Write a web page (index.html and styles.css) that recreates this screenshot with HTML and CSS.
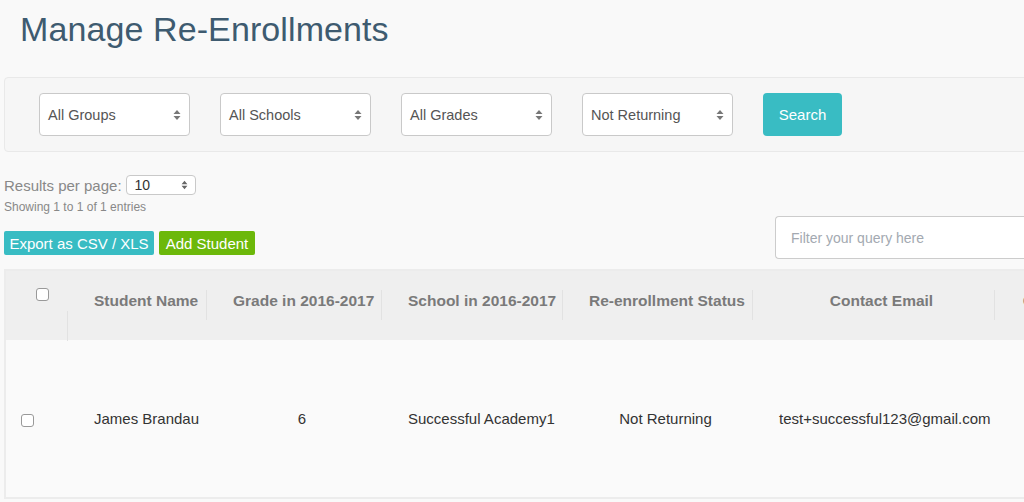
FILE: index.html
```html
<!DOCTYPE html>
<html>
<head>
<meta charset="utf-8">
<link rel="stylesheet" href="styles.css">
</head>
<body>
<div class="page">
  <h1 class="title">Manage Re-Enrollments</h1>

  <div class="filters">
    <div class="select big"><span>All Groups</span><svg class="arr" width="8" height="12" viewBox="0 0 8 12"><path d="M4 1 L7.5 5 H0.5 Z M4 11 L0.5 7 H7.5 Z" fill="#777"/></svg></div>
    <div class="select big"><span>All Schools</span><svg class="arr" width="8" height="12" viewBox="0 0 8 12"><path d="M4 1 L7.5 5 H0.5 Z M4 11 L0.5 7 H7.5 Z" fill="#777"/></svg></div>
    <div class="select big"><span>All Grades</span><svg class="arr" width="8" height="12" viewBox="0 0 8 12"><path d="M4 1 L7.5 5 H0.5 Z M4 11 L0.5 7 H7.5 Z" fill="#777"/></svg></div>
    <div class="select big"><span>Not Returning</span><svg class="arr" width="8" height="12" viewBox="0 0 8 12"><path d="M4 1 L7.5 5 H0.5 Z M4 11 L0.5 7 H7.5 Z" fill="#777"/></svg></div>
    <button class="search">Search</button>
  </div>

  <div class="tools">
    <div class="left">
      <div class="perpage">
        <span class="lbl">Results per page:</span>
        <div class="select small"><span>10</span><svg class="arr" width="7" height="10" viewBox="0 0 8 12"><path d="M4 1 L7.5 5 H0.5 Z M4 11 L0.5 7 H7.5 Z" fill="#666"/></svg></div>
      </div>
      <div class="showing">Showing 1 to 1 of 1 entries</div>
      <div class="btns">
        <button class="btn teal">Export as CSV / XLS</button>
        <button class="btn green">Add Student</button>
      </div>
    </div>
    <div class="query">Filter your query here</div>
  </div>

  <div class="tablewrap">
    <table class="grid">
      <colgroup>
        <col style="width:62px">
        <col style="width:139px">
        <col style="width:175px">
        <col style="width:181px">
        <col style="width:190px">
        <col style="width:242px">
        <col style="width:150px">
      </colgroup>
      <thead>
        <tr>
          <th class="chk"><span class="box"></span></th>
          <th class="first">Student Name</th>
          <th>Grade in 2016-2017</th>
          <th>School in 2016-2017</th>
          <th>Re-enrollment Status</th>
          <th>Contact Email</th>
          <th>Contact Phone</th>
        </tr>
      </thead>
      <tbody>
        <tr>
          <td class="chk"><span class="box"></span></td>
          <td>James Brandau</td>
          <td>6</td>
          <td>Successful Academy1</td>
          <td>Not Returning</td>
          <td>test+successful123@gmail.com</td>
          <td></td>
        </tr>
      </tbody>
    </table>
  </div>
</div>
</body>
</html>
```

FILE: styles.css
```css
html, body {
  margin: 0;
  padding: 0;
  overflow: hidden;
  background: #f9f9f9;
  font-family: "Liberation Sans", Arial, sans-serif;
}
.page {
  width: 1200px;
  padding: 0 0 0 4px;
}
.title {
  margin: 0;
  padding: 10px 0 0 16px;
  height: 69px;
  box-sizing: border-box;
  font-size: 34px;
  font-weight: normal;
  color: #3e5b70;
  letter-spacing: 0.1px;
}
.filters {
  box-sizing: border-box;
  height: 75px;
  margin-top: 8px;
  border: 1px solid #e9e9e9;
  border-radius: 4px;
  background: #f6f6f6;
  display: flex;
  align-items: center;
  gap: 30px;
  padding: 0 0 0 34px;
}
.select {
  box-sizing: border-box;
  display: flex;
  align-items: center;
  justify-content: space-between;
  background: #fff;
  border: 1px solid #c9c9c9;
  border-radius: 4px;
}
.select.big {
  width: 151px;
  height: 43px;
  padding: 0 8px 0 8px;
  font-size: 14.5px;
  color: #555;
}
.select.small {
  width: 70px;
  height: 20px;
  padding: 0 7px 0 8px;
  font-size: 14px;
  color: #333;
  border-radius: 4px;
}
.search {
  width: 79px;
  height: 43px;
  border: none;
  border-radius: 4px;
  background: #39bcc3;
  color: #fff;
  font-family: inherit;
  font-size: 15px;
  padding: 0;
}
.tools {
  display: flex;
  justify-content: space-between;
  align-items: flex-start;
  width: 1020px;
}
.left {
  display: flex;
  flex-direction: column;
}
.perpage {
  display: flex;
  align-items: center;
  gap: 4px;
  margin-top: 22px;
  height: 22px;
}
.lbl {
  font-size: 15px;
  color: #888;
}
.showing {
  font-size: 12px;
  color: #888;
  margin-top: 4px;
  line-height: 15px;
}
.btns {
  display: flex;
  gap: 5px;
  margin-top: 16px;
}
.btn {
  height: 24px;
  border: none;
  border-radius: 2px;
  color: #fff;
  font-family: inherit;
  font-size: 15px;
  padding: 0;
  white-space: nowrap;
}
.btn.teal { background: #38bcc3; width: 150px; }
.btn.green { background: #6cb80a; width: 96px; }
.query {
  box-sizing: border-box;
  margin-top: 64px;
  width: 249px;
  height: 43px;
  border: 1px solid #cccccc;
  border-right: none;
  border-radius: 4px 0 0 4px;
  background: #fff;
  padding: 0 0 0 15px;
  display: flex;
  align-items: center;
  font-size: 14px;
  color: #a3a9b1;
}
.tablewrap {
  margin-top: 10px;
}
.grid {
  border-collapse: collapse;
  table-layout: fixed;
  width: 1139px;
  border: 2px solid #ececec;
  border-right: none;
}
.grid th {
  position: relative;
  background: #efefef;
  height: 70px;
  box-sizing: border-box;
  vertical-align: top;
  padding: 21px 10px 0 27px;
  font-size: 15.5px;
  font-weight: bold;
  color: #7a7a7a;
  text-align: center;
  white-space: nowrap;
}
.grid th::before {
  content: "";
  position: absolute;
  left: 0;
  top: 19px;
  height: 30px;
  border-left: 1px solid #e2e2e2;
}
.grid th.chk::before { display: none; }
.grid th.first::before { top: 40px; height: 30px; }
.grid th.chk {
  padding: 14px 0 0 12px;
  text-align: center;
}
.grid td {
  background: #fafafa;
  height: 158px;
  box-sizing: border-box;
  padding: 0 10px 0 27px;
  font-size: 15px;
  color: #333;
  text-align: center;
  white-space: nowrap;
}
.grid tbody tr { border-bottom: 2px solid #ececec; }
.grid td.chk {
  padding: 0;
  text-align: left;
}
.grid td.chk .box { margin-left: 15px; }
.box {
  display: inline-block;
  width: 11px;
  height: 11px;
  border: 1px solid #999;
  border-radius: 3px;
  background: #fff;
  vertical-align: middle;
}
```
